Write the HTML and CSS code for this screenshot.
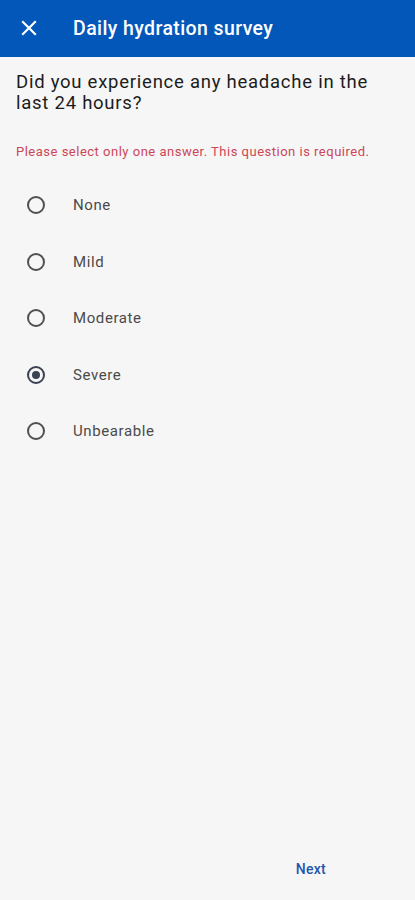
FILE: index.html
```html
<!DOCTYPE html>
<html>
<head>
<meta charset="utf-8">
<link rel="stylesheet" href="styles.css">
</head>
<body>
<div class="app">
  <header class="bar">
    <span class="close">
      <svg width="16" height="16" viewBox="0 0 16 16"><path d="M2 2L14 14M14 2L2 14" stroke="#fff" stroke-width="2.2" stroke-linecap="square"/></svg>
    </span>
    <h1 class="title">Daily hydration survey</h1>
  </header>
  <main class="content">
    <p class="question">Did you experience any headache in the last 24 hours?</p>
    <p class="error">Please select only one answer. This question is required.</p>
    <ul class="options">
      <li class="option"><span class="radio"></span><span class="label">None</span></li>
      <li class="option"><span class="radio"></span><span class="label">Mild</span></li>
      <li class="option"><span class="radio"></span><span class="label">Moderate</span></li>
      <li class="option"><span class="radio checked"></span><span class="label">Severe</span></li>
      <li class="option"><span class="radio"></span><span class="label">Unbearable</span></li>
    </ul>
  </main>
  <footer class="foot">
    <span class="next">Next</span>
  </footer>
</div>
</body>
</html>
```
FILE: styles.css
```css
html, body { margin: 0; padding: 0; }
body {
  background: #f6f6f6;
  font-family: Roboto, "Noto Sans", sans-serif;
  width: 415px;
  height: 900px;
  overflow: hidden;
}
.app { display: flex; flex-direction: column; height: 900px; }
.bar {
  height: 57px;
  background: #0257b9;
  display: flex;
  align-items: center;
  flex-shrink: 0;
}
.close { width: 16px; height: 16px; margin-left: 21px; display: flex; margin-top: -1px; }
.title {
  margin: 0 0 0 36px;
  color: #fff;
  font-size: 19.5px;
  font-weight: 500;
  letter-spacing: 0.4px;
}
.content { flex: 1; padding: 0 16px; }
.question {
  margin: 15px 0 0 0;
  font-size: 18.5px;
  line-height: 21px;
  color: #1c1c1c;
  letter-spacing: 0.75px;
  max-width: 370px;
}
.error {
  margin: 30px 0 0 0;
  font-size: 13px;
  line-height: 16px;
  color: #cc4657;
  letter-spacing: 0.5px;
}
.options { list-style: none; margin: 17px 0 0 0; padding: 0; }
.option { display: flex; align-items: center; height: 56.5px; }
.radio {
  width: 14px; height: 14px;
  border: 2px solid #505050;
  border-radius: 50%;
  margin-left: 11px;
  box-sizing: content-box;
  display: flex; align-items: center; justify-content: center;
}
.radio.checked { border-color: #3b4253; }
.radio.checked::after {
  content: "";
  width: 8px; height: 8px;
  border-radius: 50%;
  background: #3b4253;
}
.label { margin-left: 28px; font-size: 15px; color: #4a4a4a; letter-spacing: 0.6px; }
.foot {
  height: 64px;
  display: flex;
  justify-content: flex-end;
  align-items: flex-start;
  flex-shrink: 0;
}
.next {
  margin: 25px 89px 0 0;
  font-size: 14px;
  font-weight: 500;
  color: #1f56b0;
  letter-spacing: 0.3px;
}
```
